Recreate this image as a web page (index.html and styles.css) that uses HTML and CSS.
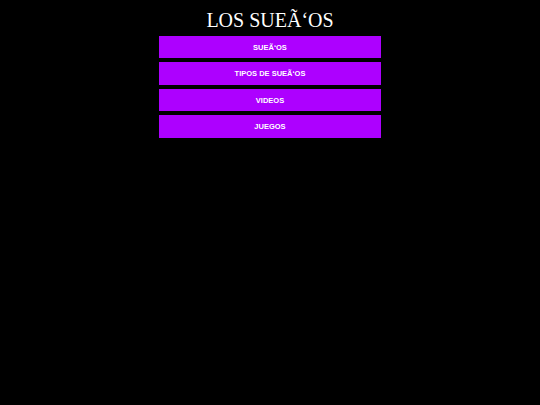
FILE: index.html
```html
<!DOCTYPE html>
<html lang="es">
<head>
  <meta charset="UTF-8" />
  <title>LOS SUEÃ‘OS</title>
  <link rel="stylesheet" href="styles.css">
</head>
<body>
  <h1>LOS SUEÃ‘OS</h1>
  <div class="menu">
    <a href="#">SUEÃ‘OS</a>
    <a href="#">TIPOS DE SUEÃ‘OS</a>
    <a href="#">VIDEOS</a>
    <a href="#">JUEGOS</a>
  </div>
</body>
</html>
```

FILE: styles.css
```css
body {
  margin: 0;
  background-color: #000;
  color: #fff;
  font-family: 'Liberation Serif', serif;
}
h1 {
  margin: 0;
  padding-top: 8px;
  font-size: 20px;
  font-weight: normal;
  text-align: center;
  line-height: 24px;
}
.menu {
  display: flex;
  flex-direction: column;
  gap: 4px;
  width: 222px;
  margin: 4px auto 0;
}
.menu a {
  display: block;
  height: 22.4px;
  line-height: 23px;
  background-color: #ad00ff;
  color: #fff;
  text-decoration: none;
  text-align: center;
  font-family: 'Liberation Sans', Arial, sans-serif;
  font-size: 7.5px;
  font-weight: bold;
}
```
